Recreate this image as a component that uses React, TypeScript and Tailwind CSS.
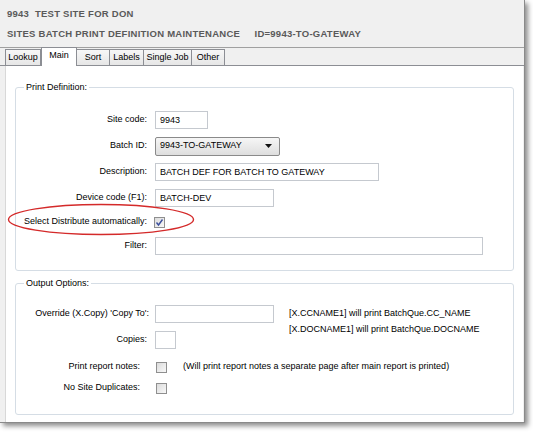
import React from "react";

const tabs = ["Lookup", "Main", "Sort", "Labels", "Single Job", "Other"];
const tabWidths = [36, 36, 34, 35, 49, 34];

function TextBox({ w, value }: { w: string; value?: string }) {
  return (
    <div
      className={`${w} h-[18px] border border-[#c5c9cf] bg-white px-[4px] text-[9px] leading-[16px] text-black`}
    >
      {value}
    </div>
  );
}

function CheckBox({ checked }: { checked?: boolean }) {
  return (
    <div className="flex h-[11px] w-[11px] items-center justify-center border border-[#8f8f8f] bg-gradient-to-br from-[#dcdcdc] to-[#f8f8f8]">
      {checked && (
        <svg width="9" height="9" viewBox="0 0 9 9">
          <path
            d="M1.5 4.5 L3.5 7 L7.5 1.5"
            fill="none"
            stroke="#3c4f9c"
            strokeWidth="1.4"
          />
        </svg>
      )}
    </div>
  );
}

function Row({
  label,
  labelW = "w-[131px]",
  gap = "gap-[8px]",
  h = "h-[26px]",
  children,
}: {
  label: string;
  labelW?: string;
  gap?: string;
  h?: string;
  children: React.ReactNode;
}) {
  return (
    <div className={`flex ${h} items-center ${gap}`}>
      <span className={`${labelW} shrink-0 text-right`}>{label}</span>
      {children}
    </div>
  );
}

function GroupBox({
  title,
  className,
  children,
}: {
  title: string;
  className: string;
  children: React.ReactNode;
}) {
  return (
    <div
      className={`relative mx-[9px] rounded-[3px] border border-[#d5dde5] ${className}`}
    >
      <span className="absolute left-[8px] top-[-7px] bg-white px-[2px] leading-[12px]">
        {title}
      </span>
      {children}
    </div>
  );
}

export default function App() {
  return (
    <div
      className="relative h-[436px] w-[533px] bg-white text-[9px] text-black"
      style={{ fontFamily: '"Liberation Sans", Arial, sans-serif' }}
    >
      <div className="flex h-[423px] w-[525px] flex-col border-r border-b border-[#8a8a8a] bg-[#f0f0f0] shadow-[3px_3px_5px_rgba(0,0,0,0.45)]">
        {/* header */}
        <div className="flex h-[48px] shrink-0 flex-col justify-center gap-[8px] border-b border-[#a0a0a0] px-[7px] text-[9.5px] font-bold tracking-[0.25px] text-[#5a5a5a]">
          <div className="leading-[12px]">9943&nbsp;&nbsp;TEST SITE FOR DON</div>
          <div className="leading-[12px]">
            SITES BATCH PRINT DEFINITION MAINTENANCE&nbsp;&nbsp;&nbsp;&nbsp;&nbsp;ID=9943-TO-GATEWAY
          </div>
        </div>

        {/* tabs */}
        <div className="flex h-[18px] shrink-0 items-end border-b border-[#8c8e94] pl-[5px]">
          {tabs.map((t, i) =>
            t === "Main" ? (
              <div
                key={t}
                style={{ width: tabWidths[i] }}
                className="relative -mb-px h-[19px] border border-b-0 border-[#8c8e94] bg-white pt-[1px] text-center leading-[12px]"
              >
                {t}
              </div>
            ) : (
              <div
                key={t}
                style={{ width: tabWidths[i] }}
                className="h-[16px] border border-b-0 border-[#8c8e94] bg-gradient-to-b from-[#f7f7f7] to-[#e6e6e6] text-center leading-[15px] -ml-px first:ml-0"
              >
                {t}
              </div>
            )
          )}
        </div>

        {/* panel */}
        <div className="ml-[5px] mr-[1px] flex flex-1 flex-col border-l border-[#d8d8d8] bg-white pt-[21px]">
          <GroupBox title="Print Definition:" className="h-[184px] pt-[19px]">
            <Row label="Site code:">
              <TextBox w="w-[53px]" value="9943" />
            </Row>
            <Row label="Batch ID:">
              <div className="flex h-[19px] w-[125px] items-center justify-between rounded-[2px] border border-[#8a8a8a] bg-gradient-to-b from-[#f6f6f6] to-[#dedede] pl-[4px] pr-[7px]">
                <span>9943-TO-GATEWAY</span>
                <svg width="7" height="4" viewBox="0 0 7 4">
                  <path d="M0 0 H7 L3.5 4 Z" fill="#111" />
                </svg>
              </div>
            </Row>
            <Row label="Description:">
              <TextBox w="w-[224px]" value="BATCH DEF FOR BATCH TO GATEWAY" />
            </Row>
            <Row label="Device code (F1):">
              <TextBox w="w-[119px]" value="BATCH-DEV" />
            </Row>
            <Row label="Select Distribute automatically:" gap="gap-[7px]" h="h-[22px]">
              <CheckBox checked />
            </Row>
            <Row label="Filter:">
              <TextBox w="w-[328px]" />
            </Row>
          </GroupBox>

          <GroupBox title="Output Options:" className="mt-[12px] h-[132px] pt-[17px]">
            <Row label="Override (X.Copy) 'Copy To':" labelW="w-[133px]" gap="gap-[6px]">
              <TextBox w="w-[119px]" />
              <div className="ml-[9px] mt-[14px] flex flex-col gap-[5px] leading-[11px]">
                <span>[X.CCNAME1] will print BatchQue.CC_NAME</span>
                <span>[X.DOCNAME1] will print BatchQue.DOCNAME</span>
              </div>
            </Row>
            <Row label="Copies:">
              <TextBox w="w-[21px]" />
            </Row>
            <Row label="Print report notes:" labelW="w-[124px]" gap="gap-[16px]" h="h-[28px]">
              <CheckBox />
              <span>
                (Will print report notes a separate page after main report is printed)
              </span>
            </Row>
            <Row label="No Site Duplicates:" labelW="w-[124px]" gap="gap-[16px]" h="h-[14px]">
              <CheckBox />
            </Row>
          </GroupBox>
        </div>
      </div>

      {/* highlight ellipse */}
      <svg
        className="pointer-events-none absolute left-[6px] top-[202px]"
        width="190"
        height="36"
        viewBox="0 0 190 36"
      >
        <ellipse
          cx="95"
          cy="17.5"
          rx="92.5"
          ry="15"
          fill="none"
          stroke="#d42a2a"
          strokeWidth="1.4"
        />
      </svg>
    </div>
  );
}
